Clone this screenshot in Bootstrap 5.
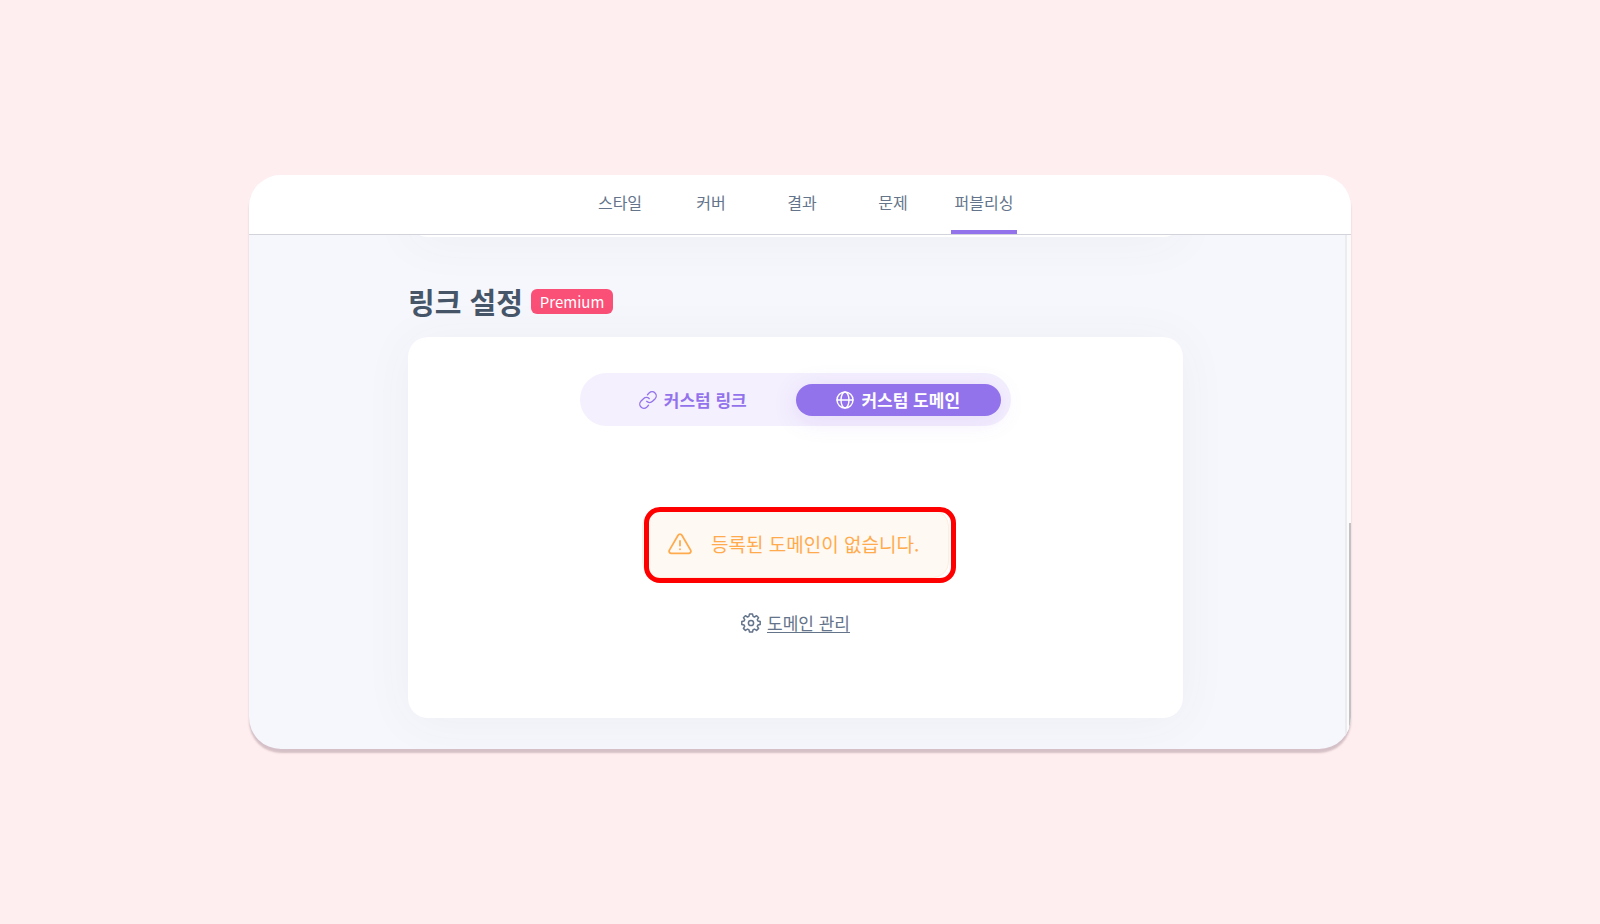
<!DOCTYPE html>
<html lang="ko">
<head>
<meta charset="utf-8">
<meta name="viewport" content="width=device-width, initial-scale=1">
<title>링크 설정</title>
<link href="https://cdn.jsdelivr.net/npm/bootstrap@5.3.0/dist/css/bootstrap.min.css" rel="stylesheet">
<style>
  body {
    background: #ffeeef;
    color: #64748b;
    font-family: "Noto Sans CJK KR", sans-serif;
    font-size: 17px;
    line-height: 24px;
  }
  svg { flex: none; fill: none; stroke: currentColor; stroke-linecap: round; stroke-linejoin: round; }
  .panel {
    max-width: 1102px;
    border-radius: 32px;
    background: #f6f7fd;
    box-shadow: 0 4px 2px rgba(90, 60, 80, .26);
  }
  .tabs {
    gap: 25px;
    padding-left: 4px;
    background: #fff;
    border-bottom: 1px solid #d3d3dc;
    z-index: 1;
  }
  .tab-link {
    width: 66px;
    height: 59px;
    padding-top: 15px;
    border-bottom: 4px solid transparent;
    color: #64748b;
    font-size: 16px;
    text-align: center;
    text-decoration: none;
    white-space: nowrap;
  }
  .tab-link.active { border-color: #9373ec; }
  .content { padding-right: 3px; }
  .sheet {
    width: 100%;
    max-width: 775px;
    border-radius: 20px;
    background: #fff;
    box-shadow: 0 4px 50px rgba(80, 40, 70, .05);
  }
  .sheet-above { height: 40px; margin-top: -38px; }
  .section-head { max-width: 775px; margin-top: 44px; margin-bottom: 16px; gap: 8px; }
  .section-head h1 { color: #475569; font-size: 29px; line-height: 40px; font-weight: 700; }
  .premium { padding: 0 9px; border-radius: 6px; background: #fa5078; color: #fff; font-size: 15px; line-height: 25px; }
  .sheet-main { padding: 36px 16px 83px; margin-bottom: 31px; }
  .switch { width: 431px; max-width: 100%; padding: 11px 10px 10px; border-radius: 27px; background: #f4f0fe; }
  .switch-btn {
    flex: 1 1 0;
    height: 32px;
    border: 0;
    border-radius: 16px;
    background: none;
    color: #9373ec;
    font-weight: 700;
    gap: 7px;
    padding: 0;
  }
  .switch-btn.active { background: #9373ec; color: #fff; box-shadow: 0 4px 24px rgba(147, 93, 225, .16); }
  .notice {
    width: 307px;
    height: 68px;
    margin-top: 84px;
    padding-left: 25px;
    gap: 19px;
    border: 1px solid #ffeedd;
    border-radius: 16px;
    background: #fff9f3;
    color: #ffab4d;
    font-size: 19px;
  }
  .highlight { top: -4px; bottom: -6px; left: 1px; right: -8px; border: 5px solid #f00; border-radius: 16px; }
  .manage { margin-top: 33px; gap: 6px; color: #64748b; text-decoration: none; }
  .manage span { text-decoration: underline; text-decoration-thickness: 1px; text-underline-offset: 2px; }
  .track { width: 6px; border-left: 2px solid #ececf0; background: #fbfbfc; }
  .thumb { width: 2px; height: 44%; background: #c2c2c5; }
</style>
</head>
<body>
<div class="min-vh-100 d-flex align-items-center justify-content-center">
  <main class="panel w-100 overflow-hidden">
    <nav class="tabs d-flex justify-content-center position-relative">
      <a class="tab-link" href="#">스타일</a>
      <a class="tab-link" href="#">커버</a>
      <a class="tab-link" href="#">결과</a>
      <a class="tab-link" href="#">문제</a>
      <a class="tab-link active" href="#" aria-current="page">퍼블리싱</a>
    </nav>
    <div class="d-flex">
      <div class="content flex-grow-1 d-flex flex-column align-items-center">
        <div class="sheet sheet-above"></div>
        <header class="section-head w-100 d-flex align-items-center">
          <h1 class="m-0">링크 설정</h1>
          <span class="premium">Premium</span>
        </header>
        <section class="sheet sheet-main d-flex flex-column align-items-center">
          <div class="switch d-flex">
            <button type="button" class="switch-btn d-flex align-items-center justify-content-center">
              <svg width="18" height="18" viewBox="32 32 192 192" stroke-width="14"><path d="M122.3 71.400l19.800-19.800a44.100 44.100 0 0 1 62.300 62.300l-28.300 28.200a43.900 43.900 0 0 1-62.200 0M133.700 184.600l-19.800 19.800a44.100 44.100 0 0 1-62.300-62.300l28.300-28.200a43.900 43.900 0 0 1 62.200 0"/></svg>
              커스텀 링크
            </button>
            <button type="button" class="switch-btn active d-flex align-items-center justify-content-center">
              <svg width="18" height="18" viewBox="0 0 18 18" stroke-width="1.4"><circle cx="9" cy="9" r="8"/><ellipse cx="9" cy="9" rx="4" ry="8"/><path d="M1 9h16"/></svg>
              커스텀 도메인
            </button>
          </div>
          <div class="notice d-flex align-items-center position-relative" role="alert">
            <svg width="24" height="22" viewBox="0 0 24 22" stroke-width="1.8"><path d="M10.100 2.300 1.400 17.100a2.200 2.200 0 0 0 1.900 3.300h17.400a2.200 2.200 0 0 0 1.900-3.300L13.900 2.300a2.200 2.200 0 0 0-3.800 0ZM12 8v4.500M12 16.200v.1"/></svg>
            <span class="text-nowrap">등록된 도메인이 없습니다.</span>
            <div class="highlight position-absolute"></div>
          </div>
          <a class="manage d-flex align-items-center" href="#">
            <svg width="20" height="20" viewBox="0 0 20 20" stroke-width="1.5"><path d="M8.500 1h3l.6 2.400 1.400.6 2.100-1.300 2 2L16.300 6.700l.6 1.300 2.300.6v2.800l-2.300.6-.6 1.400 1.300 2-2 2-2.100-1.300-1.400.6L11.500 19h-3l-.6-2.300-1.400-.6-2.100 1.300-2-2 1.300-2-.6-1.400L.8 11.400V8.600L3.100 8l.6-1.300-1.300-2 2-2L6.500 4l1.400-.6Z"/><circle cx="10" cy="10" r="2.600"/></svg>
            <span>도메인 관리</span>
          </a>
        </section>
      </div>
      <div class="track d-flex align-items-end justify-content-end" aria-hidden="true"><div class="thumb"></div></div>
    </div>
  </main>
</div>
<script src="https://cdn.jsdelivr.net/npm/bootstrap@5.3.0/dist/js/bootstrap.bundle.min.js"></script>
</body>
</html>
